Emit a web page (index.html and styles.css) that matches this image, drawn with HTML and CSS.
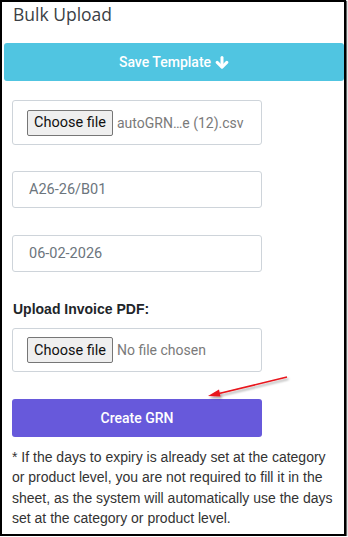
FILE: index.html
```html
<!DOCTYPE html>
<html>
<head>
<meta charset="utf-8">
<link rel="stylesheet" href="styles.css">
</head>
<body>
<div class="frame">
  <h2 class="title">Bulk Upload</h2>
  <button class="btn-save">Save Template
    <svg class="arrow-down" viewBox="0 0 14 13" width="14" height="13"><g fill="none" stroke="#fff" stroke-width="3" stroke-linecap="round" stroke-linejoin="round"><path d="M7 1.6V10.6"/><path d="M2.2 6.4L7 11.2L11.8 6.4"/></g></svg>
  </button>
  <div class="form">
    <div class="file-box">
      <span class="file-btn">Choose file</span>
      <span class="file-name">autoGRN…e (12).csv</span>
    </div>
    <div class="text-box">A26-26/B01</div>
    <div class="text-box text-box-2">06-02-2026</div>
    <label class="label">Upload Invoice PDF:</label>
    <div class="file-box file-box-2">
      <span class="file-btn">Choose file</span>
      <span class="file-name">No file chosen</span>
    </div>
    <button class="btn-create">Create GRN</button>
    <p class="note">* If the days to expiry is already set at the category or product level, you are not required to fill it in the sheet, as the system will automatically use the days set at the category or product level.</p>
  </div>
  <svg class="red-arrow" width="90" height="30" viewBox="0 0 90 30">
    <defs>
      <filter id="sh" x="-20%" y="-50%" width="140%" height="200%">
        <feDropShadow dx="1.5" dy="2" stdDeviation="1.2" flood-color="#000" flood-opacity="0.35"/>
      </filter>
    </defs>
    <g filter="url(#sh)">
      <line x1="84" y1="3" x2="14" y2="20" stroke="#e8141b" stroke-width="1.6"/>
      <path d="M5 22 L16 15.5 L17.5 22.5 Z" fill="#e8141b"/>
    </g>
  </svg>
</div>
</body>
</html>
```
FILE: styles.css
```css
html, body {
  margin: 0;
  padding: 0;
  background: #fff;
}
.frame {
  position: relative;
  box-sizing: border-box;
  width: 346px;
  height: 536px;
  border: 2px solid #000;
  box-shadow: 1px 1px 1px rgba(0,0,0,0.6);
  background: #fff;
  overflow: hidden;
  font-family: Roboto, "Liberation Sans", Arial, sans-serif;
}
.title {
  margin: 0;
  padding: 0 0 0 11px;
  font-family: "Open Sans", sans-serif;
  font-weight: 500;
  font-size: 17.5px;
  line-height: 24px;
  color: #3b3f45;
  height: 41px;
}
.btn-save {
  display: flex;
  align-items: center;
  justify-content: center;
  gap: 4px;
  box-sizing: border-box;
  width: 340px;
  height: 38px;
  margin: 0 0 0 2px;
  border: none;
  border-radius: 3px;
  background: #50c5e1;
  color: #fff;
  font-family: Roboto, sans-serif;
  font-weight: 500;
  font-size: 14px;
  padding: 0;
}
.arrow-down {
  display: block;
  margin-top: 0;
}
.form {
  display: flex;
  flex-direction: column;
  padding: 19px 0 0 10px;
}
.file-box {
  box-sizing: border-box;
  width: 250px;
  height: 45px;
  border: 1px solid #ced4da;
  border-radius: 3px;
  display: flex;
  align-items: center;
  padding-left: 14px;
  gap: 4px;
}
.file-btn {
  box-sizing: border-box;
  height: 26px;
  width: 86px;
  display: flex;
  align-items: center;
  justify-content: center;
  border: 1px solid #767676;
  border-radius: 2px;
  background: #efefef;
  color: #111;
  font-size: 14.5px;
  font-family: Roboto, sans-serif;
}
.file-name {
  color: #7a7a7a;
  font-size: 14px;
  font-family: Roboto, sans-serif;
}
.text-box {
  box-sizing: border-box;
  width: 250px;
  height: 37px;
  margin-top: 26px;
  border: 1px solid #ced4da;
  border-radius: 3px;
  display: flex;
  align-items: center;
  padding-left: 16px;
  color: #6c757d;
  font-size: 14.5px;
  font-family: Roboto, sans-serif;
}
.text-box-2 {
  margin-top: 27px;
}
.label {
  margin-top: 27px;
  font-family: "Liberation Sans", Arial, sans-serif;
  font-weight: 700;
  font-size: 14px;
  line-height: 20px;
  color: #212529;
  padding-left: 1px;
}
.file-box-2 {
  margin-top: 9px;
  height: 44px;
}
.btn-create {
  box-sizing: border-box;
  width: 250px;
  height: 38px;
  margin-top: 27px;
  border: none;
  border-radius: 3px;
  background: #6759db;
  color: #fff;
  font-family: Roboto, sans-serif;
  font-weight: 500;
  font-size: 14px;
  padding: 0;
}
.note {
  width: 326px;
  margin: 10px 0 0 0;
  font-family: "Liberation Sans", Arial, sans-serif;
  font-size: 14px;
  line-height: 20.4px;
  color: #333;
}
.red-arrow {
  position: absolute;
  left: 201px;
  top: 372px;
}
```
